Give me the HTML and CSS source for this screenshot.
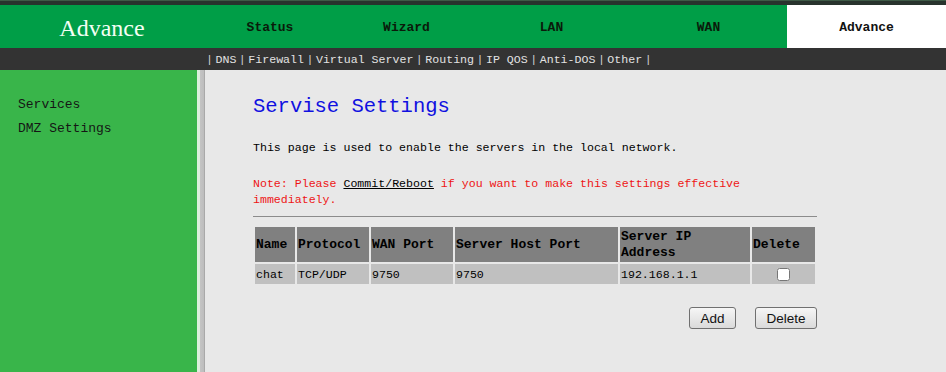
FILE: index.html
```html
<!DOCTYPE html>
<html lang="en">
<head>
  <meta charset="UTF-8">
  <title>Advance - Services</title>
  <link rel="stylesheet" href="styles.css">
</head>
<body>

  <div class="topline"></div>

  <div class="header">
    <div class="logo">Advance</div>
    <div class="tab tab-status">Status</div>
    <div class="tab tab-wizard">Wizard</div>
    <div class="tab tab-lan">LAN</div>
    <div class="tab tab-wan">WAN</div>
    <div class="tab tab-advance active">Advance</div>
  </div>

  <div class="subnav">
    <span class="sep">|</span><a>DNS</a><span class="sep">|</span><a>Firewall</a><span class="sep">|</span><a>Virtual Server</a><span class="sep">|</span><a>Routing</a><span class="sep">|</span><a>IP QOS</a><span class="sep">|</span><a>Anti-DOS</a><span class="sep">|</span><a>Other</a><span class="sep">|</span>
  </div>

  <div class="main">
    <div class="sidebar">
      <div class="side-item">Services</div>
      <div class="side-item">DMZ Settings</div>
    </div>
    <div class="divider"></div>
    <div class="content">
      <h1>Servise Settings</h1>
      <p class="intro">This page is used to enable the servers in the local network.</p>
      <p class="note">Note: Please <u class="commit">Commit/Reboot</u> if you want to make this settings effective immediately.</p>
      <div class="rule"></div>

      <table class="services">
        <colgroup>
          <col style="width:40px">
          <col style="width:72px">
          <col style="width:82px">
          <col style="width:163px">
          <col style="width:130px">
          <col style="width:63px">
        </colgroup>
        <tr class="head">
          <th>Name</th>
          <th>Protocol</th>
          <th>WAN Port</th>
          <th>Server Host Port</th>
          <th>Server IP Address</th>
          <th>Delete</th>
        </tr>
        <tr class="row">
          <td>chat</td>
          <td>TCP/UDP</td>
          <td>9750</td>
          <td>9750</td>
          <td>192.168.1.1</td>
          <td class="check"><input type="checkbox"></td>
        </tr>
      </table>

      <div class="actions">
        <button type="button" class="btn-add">Add</button>
        <button type="button" class="btn-del">Delete</button>
      </div>
    </div>
  </div>

</body>
</html>
```

FILE: styles.css
```css
html, body {
  margin: 0;
  padding: 0;
  height: 100%;
}
body {
  font-family: "Liberation Mono", "DejaVu Sans Mono", monospace;
  background-color: #e8e8e8;
  color: #000;
  display: flex;
  flex-direction: column;
  overflow: hidden;
}
.topline {
  height: 4px;
  background-color: #28332d;
  border-top: 1px solid #3e5a46;
}
.header {
  display: flex;
  height: 43px;
  background-color: #009e47;
}
.logo {
  width: 200px;
  padding: 3px 0 0 4px;
  box-sizing: border-box;
  text-align: center;
  line-height: 40px;
  font-family: "Liberation Serif", serif;
  font-size: 24px;
  color: #f4fff4;
}
.tab {
  text-align: center;
  padding-top: 2px;
  line-height: 41px;
  font-size: 13px;
  font-weight: bold;
  color: #0a1a0a;
}
.tab-status { width: 140px; }
.tab-wizard { width: 133px; }
.tab-lan { width: 157px; }
.tab-wan { width: 157px; }
.tab-advance { flex: 1; }
.tab.active {
  background-color: #fff;
  color: #111;
}
.subnav {
  height: 22px;
  line-height: 24px;
  background-color: #333333;
  color: #e2e2e2;
  font-size: 11.6px;
  padding-left: 206px;
  white-space: nowrap;
}
.subnav a {
  padding: 0 2.5px;
}
.subnav .sep {
  color: #cfcfcf;
}
.main {
  flex: 1;
  display: flex;
}
.sidebar {
  width: 197px;
  background-color: #39b54a;
  padding-top: 23px;
}
.side-item {
  padding-left: 18px;
  line-height: 24px;
  font-size: 13px;
  color: #151515;
}
.divider {
  width: 8px;
  background: linear-gradient(to right, #dcefdc 0, #dcefdc 3px, #c4c4c4 3px, #bdbdbd 7px, #a9a9a9 7px);
}
.content {
  flex: 1;
  padding: 25px 0 0 48px;
}
h1 {
  margin: 0;
  font-size: 20.5px;
  line-height: 24px;
  font-weight: normal;
  color: #1010e0;
}
.intro {
  margin: 21px 0 0;
  font-size: 11.6px;
  line-height: 16px;
}
.note {
  margin: 20px 0 0;
  width: 564px;
  font-size: 11.6px;
  line-height: 16px;
  color: #ee1515;
}
.commit {
  color: #000;
}
.rule {
  width: 564px;
  margin-top: 8px;
  border-top: 1px solid #8c8c8c;
}
.services {
  margin-top: 8px;
  width: 564px;
  table-layout: fixed;
  border-spacing: 2px;
}
.services th, .services td {
  padding: 0 1px;
  text-align: left;
}
.services th {
  background-color: #808080;
  font-size: 13px;
  line-height: 16px;
  height: 35px;
  box-sizing: border-box;
}
.services td {
  background-color: #c0c0c0;
  font-size: 11.6px;
  height: 20px;
}
.services td.check {
  text-align: center;
}
.check input {
  margin: 0;
  width: 13px;
  height: 13px;
  vertical-align: middle;
}
.actions {
  width: 564px;
  margin-top: 21px;
  display: flex;
  justify-content: flex-end;
  gap: 19px;
}
.actions button {
  height: 22px;
  font-family: "Liberation Sans", Arial, sans-serif;
  font-size: 13.5px;
  color: #111;
  background: linear-gradient(#f6f6f6, #dadada);
  border: 1px solid #707070;
  border-radius: 3px;
  padding: 0;
}
.btn-add { width: 47px; }
.btn-del { width: 62px; }
```
